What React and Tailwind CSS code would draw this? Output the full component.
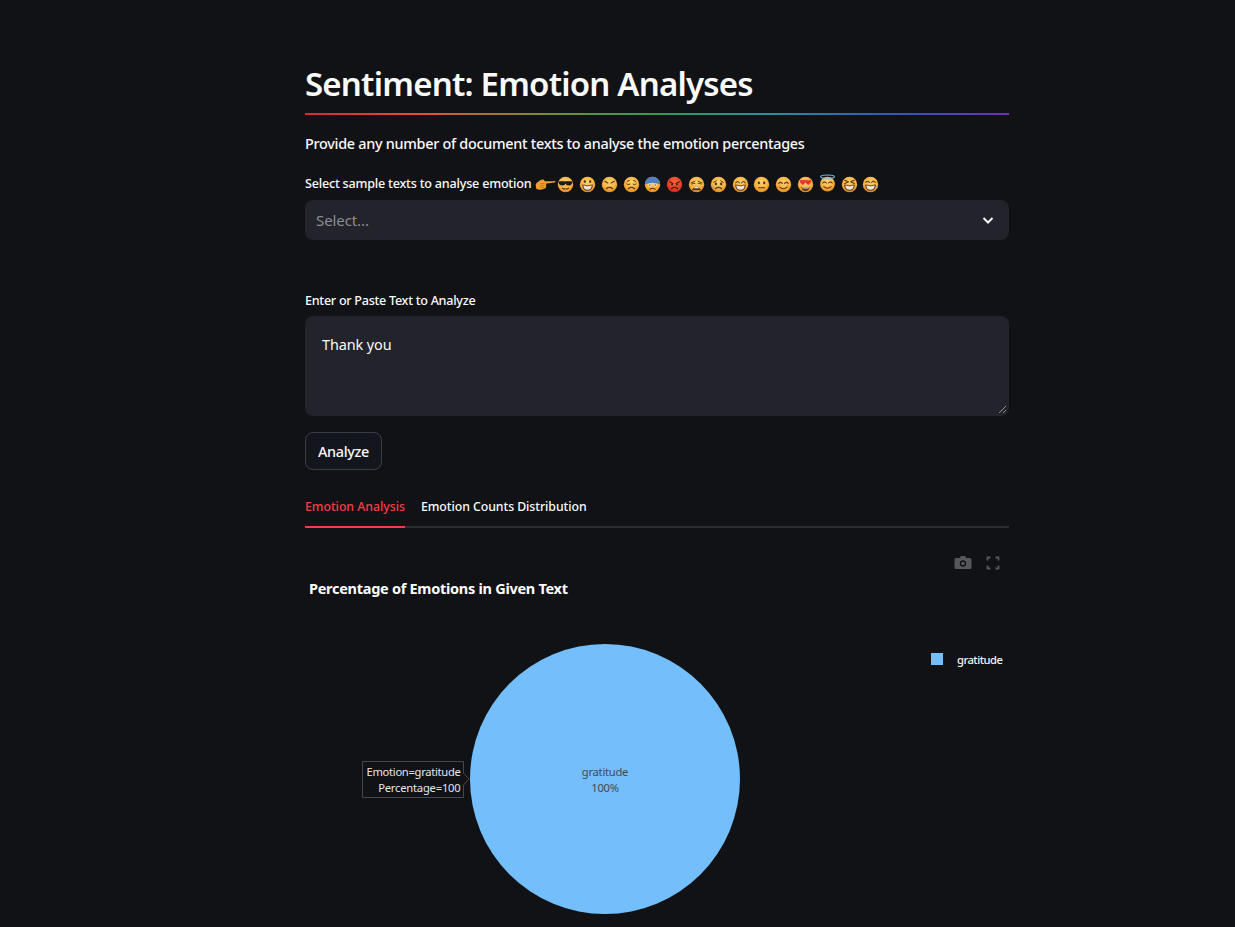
import React from "react";

const FONT = "font-['Noto_Sans',sans-serif]";

function Face({ id, children, red, over }) {
  return (
    <svg viewBox="0 0 32 32" className="w-[17px] h-[17px] shrink-0">
      <defs>
        <radialGradient id={id} cx="50%" cy="35%" r="65%">
          <stop offset="0%" stopColor={red ? "#f56a3c" : "#fbd46e"} />
          <stop offset="65%" stopColor={red ? "#e8402a" : "#f9b13d"} />
          <stop offset="100%" stopColor={red ? "#bf2a1c" : "#e58a1d"} />
        </radialGradient>
      </defs>
      <circle cx="16" cy="16" r="14.5" fill={`url(#${id})`} />
      {children}
      {over}
    </svg>
  );
}

const Eye = ({ x, y = 13, r = 2 }) => <ellipse cx={x} cy={y} rx={r} ry={r + 0.6} fill="#4a2c12" />;
const Dark = "#5a3412";
const Grin = () => <path d="M6.500 16.500 Q16 20 25.500 16.500 Q25 27.500 16 27.500 Q7 27.500 6.500 16.500Z" fill="#5c3515" stroke="#5c3515" />;
const Teeth = () => <path d="M8 18 Q16 21 24 18 Q23.500 26 16 26 Q8.500 26 8 18Z" fill="#e9e5da" />;
const Frown = () => <path d="M10 24 Q16 19 22 24" fill="none" stroke={Dark} strokeWidth="2" strokeLinecap="round" />;
const Tear = ({ x, y }) => <path d={`M${x} ${y} q-3 4 0 6 q3 -2 0 -6Z`} fill="#4aa8e8" />;

const emojis = [
  <svg key="hand" viewBox="0 0 32 20" className="w-[21px] h-[17px] shrink-0 -mr-1">
    <path d="M31 4.500 Q20 5 15 5 L13 2.500 Q9 2 6 5 Q2 7 1 10 L2 17 Q8 19 13 17 Q17 16 17 13 L17 8.500 Q25 8 31 6.500Z" fill="#f0a030" />
    <path d="M8 9 Q12 8 15 9 M8 12 Q12 11 15 12 M8 15 Q11 14 14 15" fill="none" stroke="#b86d14" strokeWidth="1.2" />
  </svg>,
  <Face key="1" id="e1">
    <path d="M3 10 L29 10 L28 15 Q26 18 21 18 Q17 18 16 14 Q15 18 11 18 Q6 18 4 15Z" fill="#1c1c20" />
    <path d="M10 23 Q16 26 22 23" fill="none" stroke={Dark} strokeWidth="2" strokeLinecap="round" />
  </Face>,
  <Face key="2" id="e2">
    <Eye x="11" y="10.500" /><Eye x="21" y="10.500" /><Grin /><Teeth />
  </Face>,
  <Face key="3" id="e3">
    <path d="M7 10 L13 13 M25 10 L19 13" stroke={Dark} strokeWidth="2" strokeLinecap="round" />
    <Eye x="11.5" y="15" r="1.6" /><Eye x="20.5" y="15" r="1.6" /><Frown />
  </Face>,
  <Face key="4" id="e4">
    <path d="M7 15 Q10 18 13 15.500 M25 15 Q22 18 19 15.500 M8 10 L12 8.500 M24 10 L20 8.500" fill="none" stroke={Dark} strokeWidth="1.8" strokeLinecap="round" /><Frown />
  </Face>,
  <Face key="5" id="e5">
    <path d="M1.500 16 A14.500 14.500 0 0 1 30.500 16 Q16 9 1.500 16Z" fill="#4d7fc4" />
    <circle cx="11" cy="17" r="2.6" fill="#fff" /><circle cx="21" cy="17" r="2.6" fill="#fff" />
    <circle cx="11" cy="17" r="1.4" fill="#3c2410" /><circle cx="21" cy="17" r="1.4" fill="#3c2410" />
    <path d="M11 25 Q16 21 21 25" fill="none" stroke={Dark} strokeWidth="2" strokeLinecap="round" />
  </Face>,
  <Face key="6" id="e6" red>
    <path d="M7 11 L13 14 M25 11 L19 14" stroke="#4c1608" strokeWidth="2.2" strokeLinecap="round" />
    <circle cx="11.5" cy="16" r="1.8" fill="#4c1608" /><circle cx="20.5" cy="16" r="1.8" fill="#4c1608" />
    <path d="M10 24 Q16 19 22 24" fill="none" stroke="#4c1608" strokeWidth="2" strokeLinecap="round" />
  </Face>,
  <Face key="7" id="e7">
    <path d="M6 13 L13 10 M26 13 L19 10 M7 15 Q10 13 13 14 M25 15 Q22 13 19 14" fill="none" stroke={Dark} strokeWidth="1.8" strokeLinecap="round" />
    <path d="M7 27 Q16 12 25 27Z" fill="#5c3515" /><path d="M10.500 23 Q16 16 21.500 23Z" fill="#e9e5da" />
  </Face>,
  <Face key="8" id="e8" over={<Tear x="6" y="19" />}>
    <path d="M7 12 L12 9 M25 12 L20 9" stroke={Dark} strokeWidth="1.8" strokeLinecap="round" />
    <Eye x="11" y="15" /><Eye x="21" y="15" /><Frown />
  </Face>,
  <Face key="9" id="e9" over={<Tear x="26" y="4" />}>
    <path d="M7 13 Q11 8 14 13 M18 13 Q21 8 25 13" fill="none" stroke={Dark} strokeWidth="2" strokeLinecap="round" />
    <Grin /><Teeth />
  </Face>,
  <Face key="10" id="e10">
    <Eye x="11" y="13" /><Eye x="21" y="13" />
    <path d="M10 22 L22 22" stroke={Dark} strokeWidth="2" strokeLinecap="round" />
  </Face>,
  <Face key="11" id="e11">
    <path d="M7 14 Q10.500 10 14 14 M18 14 Q21.500 10 25 14" fill="none" stroke={Dark} strokeWidth="2" strokeLinecap="round" />
    <path d="M9 21 Q16 27 23 21" fill="none" stroke={Dark} strokeWidth="2" strokeLinecap="round" />
    <circle cx="7.5" cy="19" r="2.5" fill="#f08a50" opacity=".6" /><circle cx="24.5" cy="19" r="2.5" fill="#f08a50" opacity=".6" />
  </Face>,
  <Face key="12" id="e12">
    <path d="M11 17 Q3 11 6 8 Q9 6 11 9 Q13 6 16 8 Q18 12 11 17Z M21 17 Q14 12 16 8 Q19 6 21 9 Q23 6 26 8 Q29 11 21 17Z" fill="#e8352e" />
    <path d="M8 20 Q16 22 24 20 Q23 28 16 28 Q9 28 8 20Z" fill="#5c3515" /><path d="M9.500 21 Q16 22.600 22.500 21 L22 23 Q16 24.500 10 23Z" fill="#f5f2e8" />
  </Face>,
  <svg key="13" viewBox="0 0 32 34" className="w-[17px] h-[18px] shrink-0 -mt-[2px]">
    <defs>
      <radialGradient id="e13" cx="50%" cy="35%" r="65%">
        <stop offset="0%" stopColor="#fbd46e" /><stop offset="65%" stopColor="#f9b13d" /><stop offset="100%" stopColor="#e58a1d" />
      </radialGradient>
    </defs>
    <circle cx="16" cy="19" r="14" fill="url(#e13)" />
    <ellipse cx="16" cy="5" rx="13" ry="3.2" fill="none" stroke="#6ec0ee" strokeWidth="2" />
    <path d="M7 17 Q10.500 13 14 17 M18 17 Q21.500 13 25 17" fill="none" stroke={Dark} strokeWidth="2" strokeLinecap="round" />
    <path d="M9 24 Q16 30 23 24" fill="none" stroke={Dark} strokeWidth="2" strokeLinecap="round" />
  </svg>,
  <Face key="14" id="e14">
    <path d="M7 8 L14 11 L7 14 M25 8 L18 11 L25 14" fill="none" stroke={Dark} strokeWidth="2" strokeLinecap="round" strokeLinejoin="round" />
    <Grin /><Teeth />
  </Face>,
  <Face key="15" id="e15" over={<><Tear x="3" y="17" /><Tear x="29" y="17" /></>}>
    <path d="M7 12 Q10.500 8 14 12 M18 12 Q21.500 8 25 12" fill="none" stroke={Dark} strokeWidth="2" strokeLinecap="round" />
    <Grin /><Teeth />
  </Face>,
];

function Chart() {
  return (
    <svg width="704" height="399" viewBox="0 0 704 399" className="block" style={{ fontFamily: "'Noto Sans', sans-serif" }}>
      <circle cx="300" cy="251" r="135" fill="#74bffb" />
      <g fill="#55575c">
        <path d="M651 30 h3.500 l1.500 -2 h4 l1.500 2 h3.500 a1.500 1.500 0 0 1 1.500 1.500 v8 a1.500 1.500 0 0 1 -1.500 1.500 h-14 a1.500 1.500 0 0 1 -1.500 -1.500 v-8 a1.500 1.500 0 0 1 1.500 -1.500z" />
        <circle cx="658" cy="35.5" r="3.2" fill="#111216" />
        <circle cx="658" cy="35.5" r="1.8" />
      </g>
      <path d="M682.500 32.500 v-3 h3 M690.500 29.500 h3 v3 M693.500 37.500 v3 h-3 M685.500 40.500 h-3 v-3" fill="none" stroke="#55575c" strokeWidth="1.800" />
      <text x="4" y="66" fontSize="14.500" fontWeight="700" letterSpacing="-0.28" fill="#ffffff">Percentage of Emotions in Given Text</text>
      <rect x="626" y="125" width="12" height="12" fill="#74bffb" />
      <text x="652" y="136" fontSize="11.200" letterSpacing="-0.5" fontWeight="500" fill="#f3f4f6">gratitude</text>
      <text x="300" y="248" fontSize="11.200" letterSpacing="-0.25" textAnchor="middle" fill="#3f4a55">gratitude</text>
      <text x="300" y="264" fontSize="11.200" letterSpacing="-0.25" textAnchor="middle" fill="#3f4a55">100%</text>
      <path d="M57.500 233.500 H158.500 V245 L164 251 L158.500 257 V269.500 H57.500Z" fill="#111216" stroke="#44474d" />
      <text x="155.500" y="248" fontSize="11.200" letterSpacing="-0.3" textAnchor="end" fill="#e5e7eb">Emotion=gratitude</text>
      <text x="155.500" y="264" fontSize="11.200" letterSpacing="-0.2" textAnchor="end" fill="#e5e7eb">Percentage=100</text>
    </svg>
  );
}

export default function App() {
  return (
    <div className={`${FONT} h-[927px] overflow-hidden bg-[#111216] text-white pl-[305px]`}>
      <main className="w-[704px] pt-[60px] flex flex-col">
        <h1 className="text-[33px] leading-[48px] font-semibold tracking-[-0.8px] text-[#fafafa]">Sentiment: Emotion Analyses</h1>
        <div className="h-[2px] mt-[5px] bg-[linear-gradient(to_right,#c8303a,#e0532a,#7e8a30,#2d9a55,#2a8c9e,#3158c0,#6a2fc0)]" />
        <p className="mt-[17px] text-[14.400px] leading-[24px] font-medium tracking-[-0.28px] text-[#fafafa]">Provide any number of document texts to analyse the emotion percentages</p>
        <div className="mt-[18px] h-[20px] flex items-center text-[12.600px] font-medium tracking-[-0.21px] text-[#fafafa]">
          <span className="mr-[4px]">Select sample texts to analyse emotion</span>
          <span className="flex items-center gap-[4.800px]">{emojis}</span>
        </div>
        <div className="mt-[6px] h-[40px] shrink-0 rounded-lg bg-[#22232b] flex items-center justify-between pl-[11px] pr-[14px]">
          <span className="text-[15px] tracking-[-0.1px] text-[#8c8d93]">Select...</span>
          <svg width="14" height="14" viewBox="0 0 14 14">
            <path d="M2.500 5 L7 9.500 L11.500 5" fill="none" stroke="#f3f4f6" strokeWidth="2" />
          </svg>
        </div>
        <label className="mt-[50px] h-[20px] pt-[2px] flex items-center text-[12.600px] font-medium tracking-[-0.28px] text-[#fafafa]">Enter or Paste Text to Analyze</label>
        <div className="relative mt-[6px] h-[100px] shrink-0 rounded-lg bg-[#22232b] px-[17px] pt-[17px] text-[14.400px] leading-[24px] tracking-[-0.08px] text-[#fafafa]">
          Thank you
          <svg width="9" height="9" viewBox="0 0 9 9" className="absolute right-[2px] bottom-[2px]">
            <path d="M8 1 L1 8 M8 5 L5 8" stroke="#8c8d93" strokeWidth="1" />
          </svg>
        </div>
        <button className="mt-[16px] w-[77px] h-[38px] pt-[1px] rounded-lg border border-[#3c3e45] bg-[#13161c] text-[14.400px] font-medium tracking-[-0.33px] text-[#fafafa]">Analyze</button>
        <div className="mt-[20px] h-[38px] shrink-0 flex gap-[16px] border-b-2 border-[#2b2d33] text-[12.300px] font-medium">
          <div className="h-[38px] w-[100px] border-b-2 border-[#ff3a46] text-[#ff3a46] leading-[33px] whitespace-nowrap tracking-[-0.03px]">Emotion Analysis</div>
          <div className="h-[38px] text-[#fafafa] leading-[33px] tracking-[-0.06px]">Emotion Counts Distribution</div>
        </div>
        <Chart />
      </main>
    </div>
  );
}
